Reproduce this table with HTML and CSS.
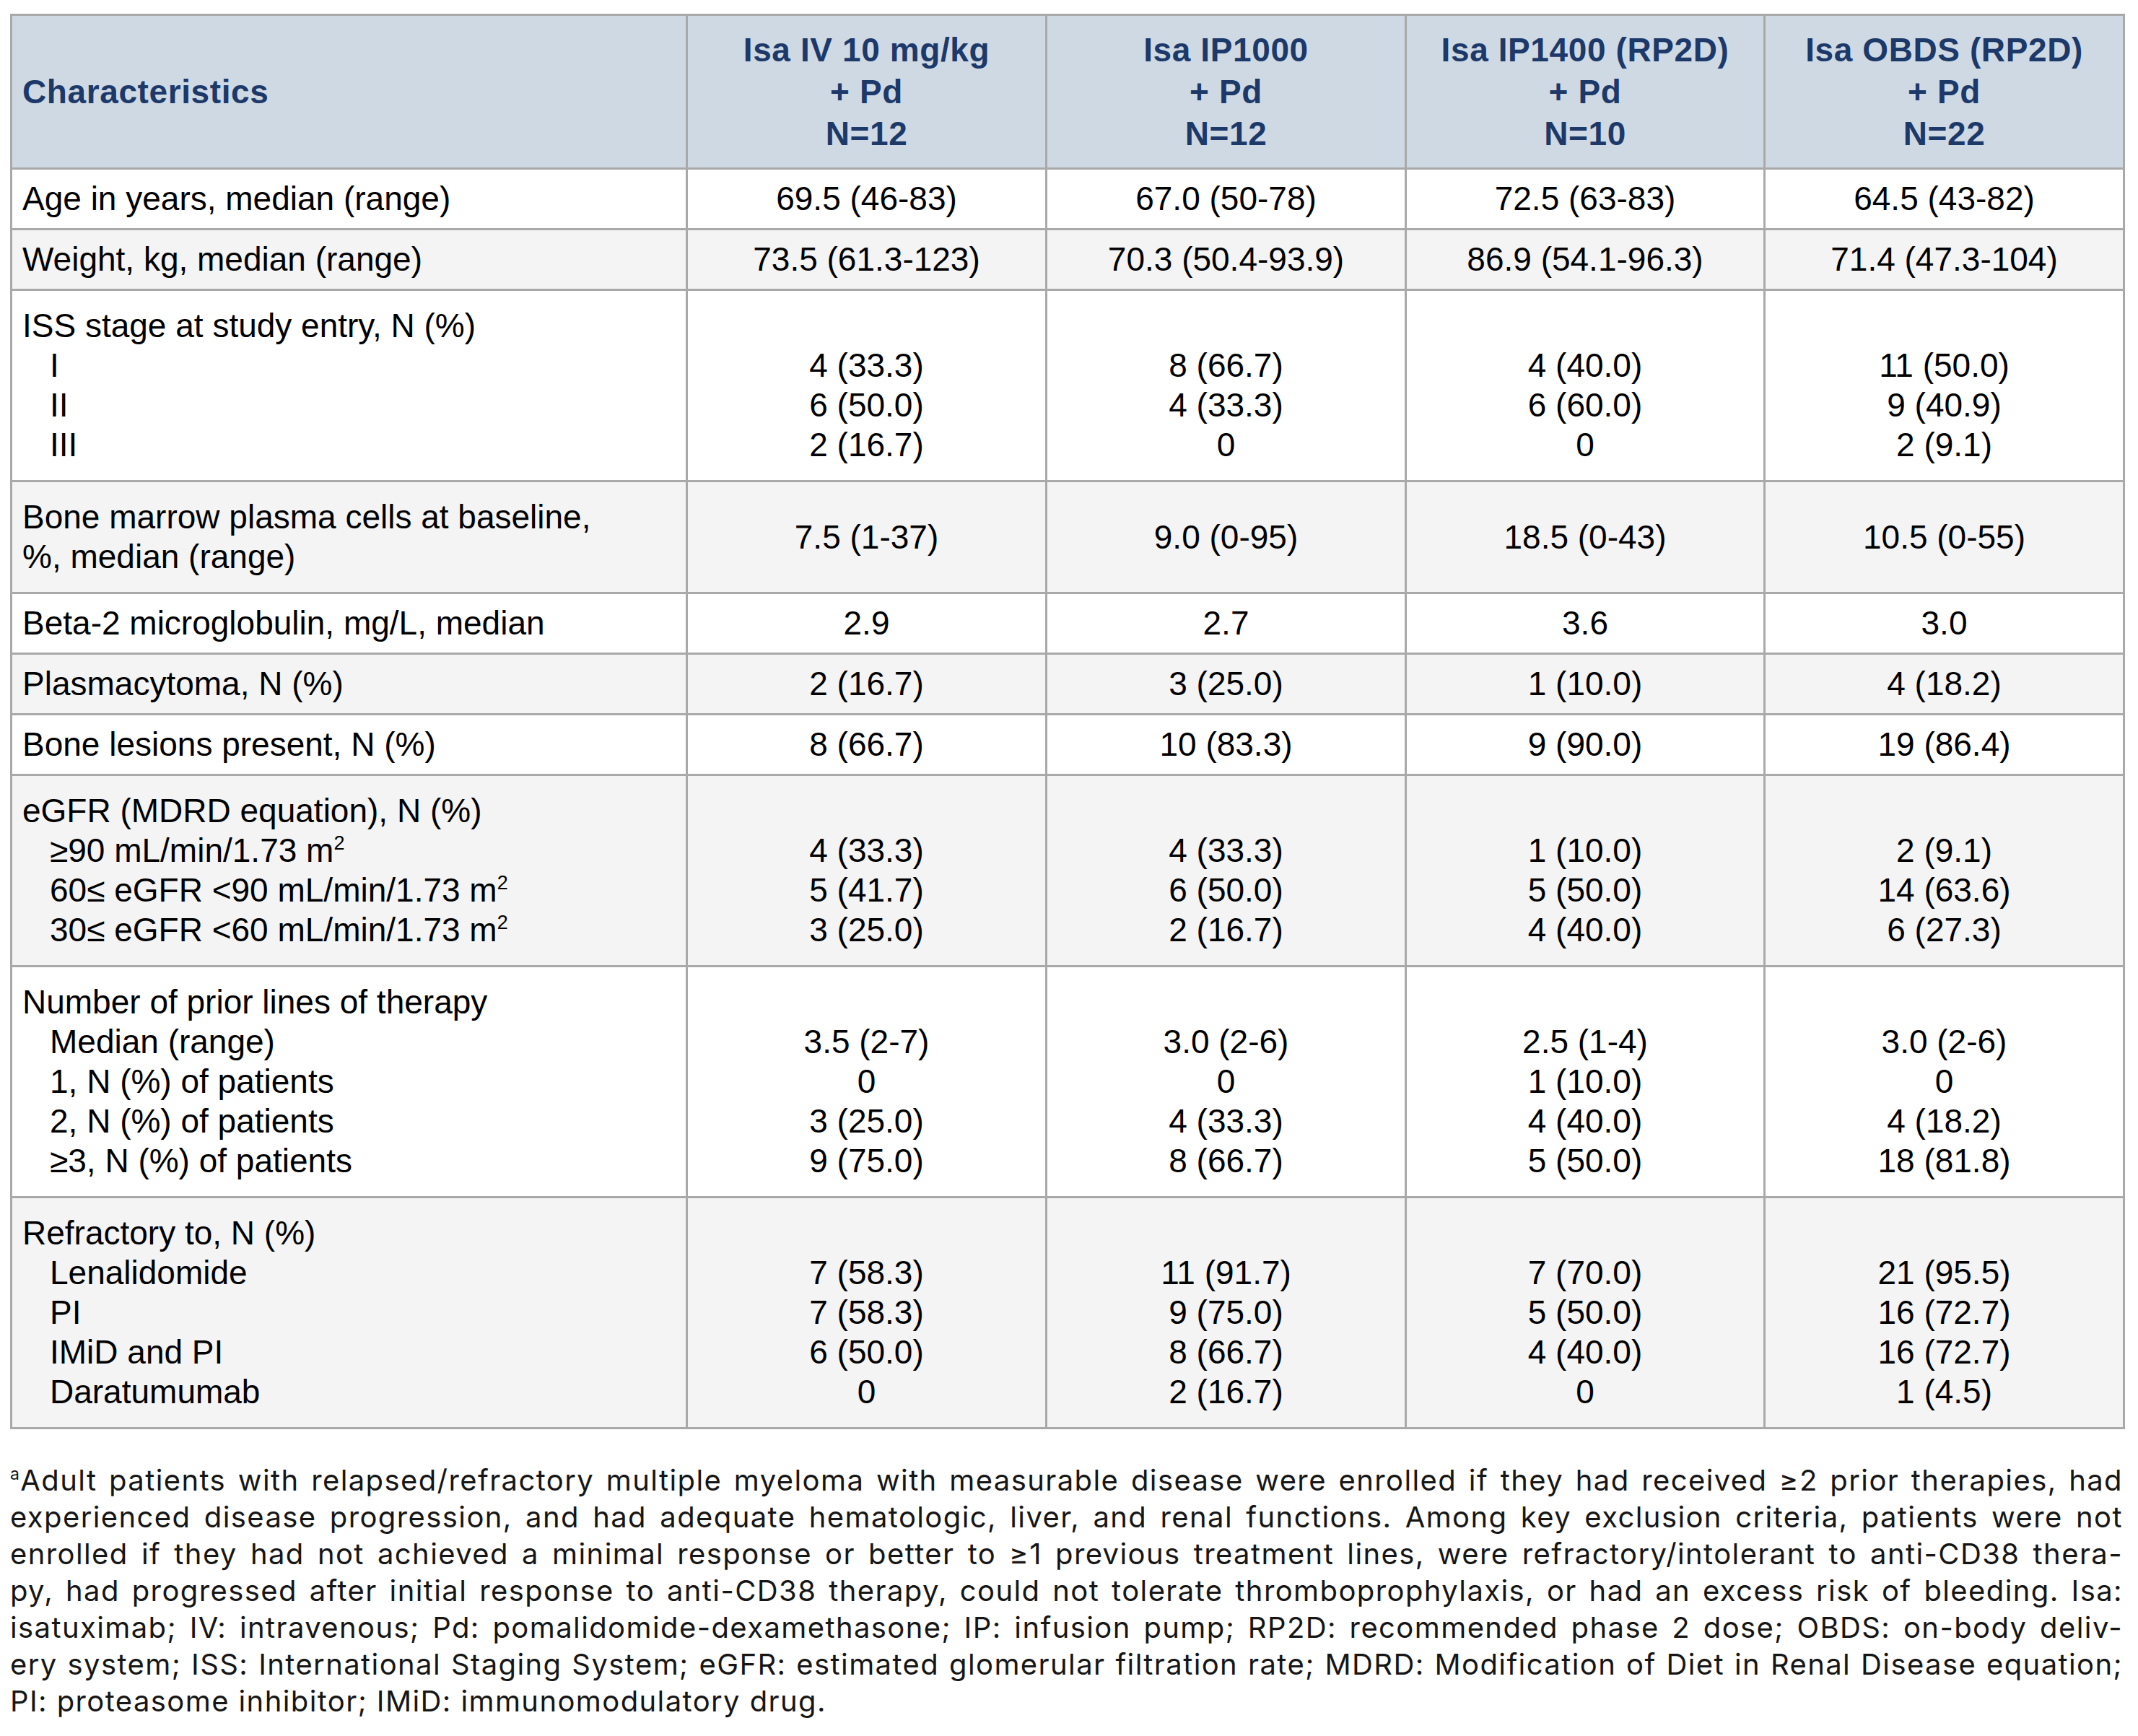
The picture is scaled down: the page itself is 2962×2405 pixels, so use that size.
FILE: index.html
```html
<!DOCTYPE html>
<html lang="en">
<head>
<meta charset="utf-8">
<title>Baseline characteristics</title>
<link rel="stylesheet" href="styles.css">
</head>
<body>
<table class="chars">
  <colgroup>
    <col class="c-label">
    <col class="c-arm">
    <col class="c-arm">
    <col class="c-arm3">
    <col class="c-arm">
  </colgroup>
  <thead>
    <tr>
      <th class="th-label">Characteristics</th>
      <th>Isa IV 10 mg/kg<br>+ Pd<br>N=12</th>
      <th>Isa IP1000<br>+ Pd<br>N=12</th>
      <th>Isa IP1400 (RP2D)<br>+ Pd<br>N=10</th>
      <th>Isa OBDS (RP2D)<br>+ Pd<br>N=22</th>
    </tr>
  </thead>
  <tbody>
    <tr>
      <td class="label">Age in years, median (range)</td>
      <td>69.5 (46-83)</td><td>67.0 (50-78)</td><td>72.5 (63-83)</td><td>64.5 (43-82)</td>
    </tr>
    <tr class="alt">
      <td class="label">Weight, kg, median (range)</td>
      <td>73.5 (61.3-123)</td><td>70.3 (50.4-93.9)</td><td>86.9 (54.1-96.3)</td><td>71.4 (47.3-104)</td>
    </tr>
    <tr class="multi">
      <td class="label">ISS stage at study entry, N (%)<span class="sub">I</span><span class="sub">II</span><span class="sub">III</span></td>
      <td>&nbsp;<br>4 (33.3)<br>6 (50.0)<br>2 (16.7)</td>
      <td>&nbsp;<br>8 (66.7)<br>4 (33.3)<br>0</td>
      <td>&nbsp;<br>4 (40.0)<br>6 (60.0)<br>0</td>
      <td>&nbsp;<br>11 (50.0)<br>9 (40.9)<br>2 (9.1)</td>
    </tr>
    <tr class="multi alt">
      <td class="label">Bone marrow plasma cells at baseline,<br>%, median (range)</td>
      <td>7.5 (1-37)</td><td>9.0 (0-95)</td><td>18.5 (0-43)</td><td>10.5 (0-55)</td>
    </tr>
    <tr>
      <td class="label">Beta-2 microglobulin, mg/L, median</td>
      <td>2.9</td><td>2.7</td><td>3.6</td><td>3.0</td>
    </tr>
    <tr class="alt">
      <td class="label">Plasmacytoma, N (%)</td>
      <td>2 (16.7)</td><td>3 (25.0)</td><td>1 (10.0)</td><td>4 (18.2)</td>
    </tr>
    <tr>
      <td class="label">Bone lesions present, N (%)</td>
      <td>8 (66.7)</td><td>10 (83.3)</td><td>9 (90.0)</td><td>19 (86.4)</td>
    </tr>
    <tr class="multi alt">
      <td class="label">eGFR (MDRD equation), N (%)<span class="sub">≥90 mL/min/1.73 m<sup class="sq">2</sup></span><span class="sub">60≤ eGFR &lt;90 mL/min/1.73 m<sup class="sq">2</sup></span><span class="sub">30≤ eGFR &lt;60 mL/min/1.73 m<sup class="sq">2</sup></span></td>
      <td>&nbsp;<br>4 (33.3)<br>5 (41.7)<br>3 (25.0)</td>
      <td>&nbsp;<br>4 (33.3)<br>6 (50.0)<br>2 (16.7)</td>
      <td>&nbsp;<br>1 (10.0)<br>5 (50.0)<br>4 (40.0)</td>
      <td>&nbsp;<br>2 (9.1)<br>14 (63.6)<br>6 (27.3)</td>
    </tr>
    <tr class="multi">
      <td class="label">Number of prior lines of therapy<span class="sub">Median (range)</span><span class="sub">1, N (%) of patients</span><span class="sub">2, N (%) of patients</span><span class="sub">≥3, N (%) of patients</span></td>
      <td>&nbsp;<br>3.5 (2-7)<br>0<br>3 (25.0)<br>9 (75.0)</td>
      <td>&nbsp;<br>3.0 (2-6)<br>0<br>4 (33.3)<br>8 (66.7)</td>
      <td>&nbsp;<br>2.5 (1-4)<br>1 (10.0)<br>4 (40.0)<br>5 (50.0)</td>
      <td>&nbsp;<br>3.0 (2-6)<br>0<br>4 (18.2)<br>18 (81.8)</td>
    </tr>
    <tr class="multi alt">
      <td class="label">Refractory to, N (%)<span class="sub">Lenalidomide</span><span class="sub">PI</span><span class="sub">IMiD and PI</span><span class="sub">Daratumumab</span></td>
      <td>&nbsp;<br>7 (58.3)<br>7 (58.3)<br>6 (50.0)<br>0</td>
      <td>&nbsp;<br>11 (91.7)<br>9 (75.0)<br>8 (66.7)<br>2 (16.7)</td>
      <td>&nbsp;<br>7 (70.0)<br>5 (50.0)<br>4 (40.0)<br>0</td>
      <td>&nbsp;<br>21 (95.5)<br>16 (72.7)<br>16 (72.7)<br>1 (4.5)</td>
    </tr>
  </tbody>
</table>
<p class="note">
  <span class="ln"><sup class="fn">a</sup>Adult patients with relapsed/refractory multiple myeloma with measurable disease were enrolled if they had received ≥2 prior therapies, had</span>
  <span class="ln">experienced disease progression, and had adequate hematologic, liver, and renal functions. Among key exclusion criteria, patients were not</span>
  <span class="ln">enrolled if they had not achieved a minimal response or better to ≥1 previous treatment lines, were refractory/intolerant to anti-CD38 thera-</span>
  <span class="ln">py, had progressed after initial response to anti-CD38 therapy, could not tolerate thromboprophylaxis, or had an excess risk of bleeding. Isa:</span>
  <span class="ln">isatuximab; IV: intravenous; Pd: pomalidomide-dexamethasone; IP: infusion pump; RP2D: recommended phase 2 dose; OBDS: on-body deliv-</span>
  <span class="ln">ery system; ISS: International Staging System; eGFR: estimated glomerular filtration rate; MDRD: Modification of Diet in Renal Disease equation;</span>
  <span class="ln last">PI: proteasome inhibitor; IMiD: immunomodulatory drug.</span>
</p>
</body>
</html>
```

FILE: styles.css
```css
html, body {
  background: #ffffff;
}

body {
  margin: 19px 0 0 14px;
  font-family: "Liberation Sans", Arial, sans-serif;
  color: #000000;
}

.chars {
  border-collapse: collapse;
  table-layout: fixed;
  width: 2927px;
  font-size: 46px;
  line-height: 55px;
}

.c-label { width: 936px; }
.c-arm { width: 498px; }
.c-arm3 { width: 497px; }

.chars th,
.chars td {
  border: 3px solid #a9a9a9;
}

.chars th {
  background: #cfd9e4;
  color: #1c3969;
  font-weight: bold;
  font-size: 46px;
  line-height: 58px;
  letter-spacing: 0.6px;
  padding: 18px 8px;
  text-align: center;
  vertical-align: middle;
}

.chars th.th-label {
  text-align: left;
  padding-left: 14px;
}

.chars td {
  padding: 13px 10px;
  text-align: center;
  vertical-align: middle;
  background: #ffffff;
}

.chars tr.alt td {
  background: #f4f4f4;
}

.chars tr.multi td {
  padding-top: 21px;
  padding-bottom: 21px;
}

.chars td.label {
  text-align: left;
  padding-left: 14px;
}

.sub {
  display: block;
  padding-left: 38px;
}

.sq {
  font-size: 27px;
  line-height: 0;
  vertical-align: 17px;
}

.note {
  width: 2927px;
  margin: 45px 0 0 0;
  font-family: Inter, "Noto Sans", sans-serif;
  font-size: 40px;
  letter-spacing: 1.4px;
  line-height: 51px;
  color: #161616;
}

.note .ln {
  display: block;
  text-align: justify;
  text-align-last: justify;
}

.note .ln.last {
  text-align-last: left;
}

.fn {
  font-size: 23px;
  line-height: 0;
  vertical-align: 15px;
}
```
